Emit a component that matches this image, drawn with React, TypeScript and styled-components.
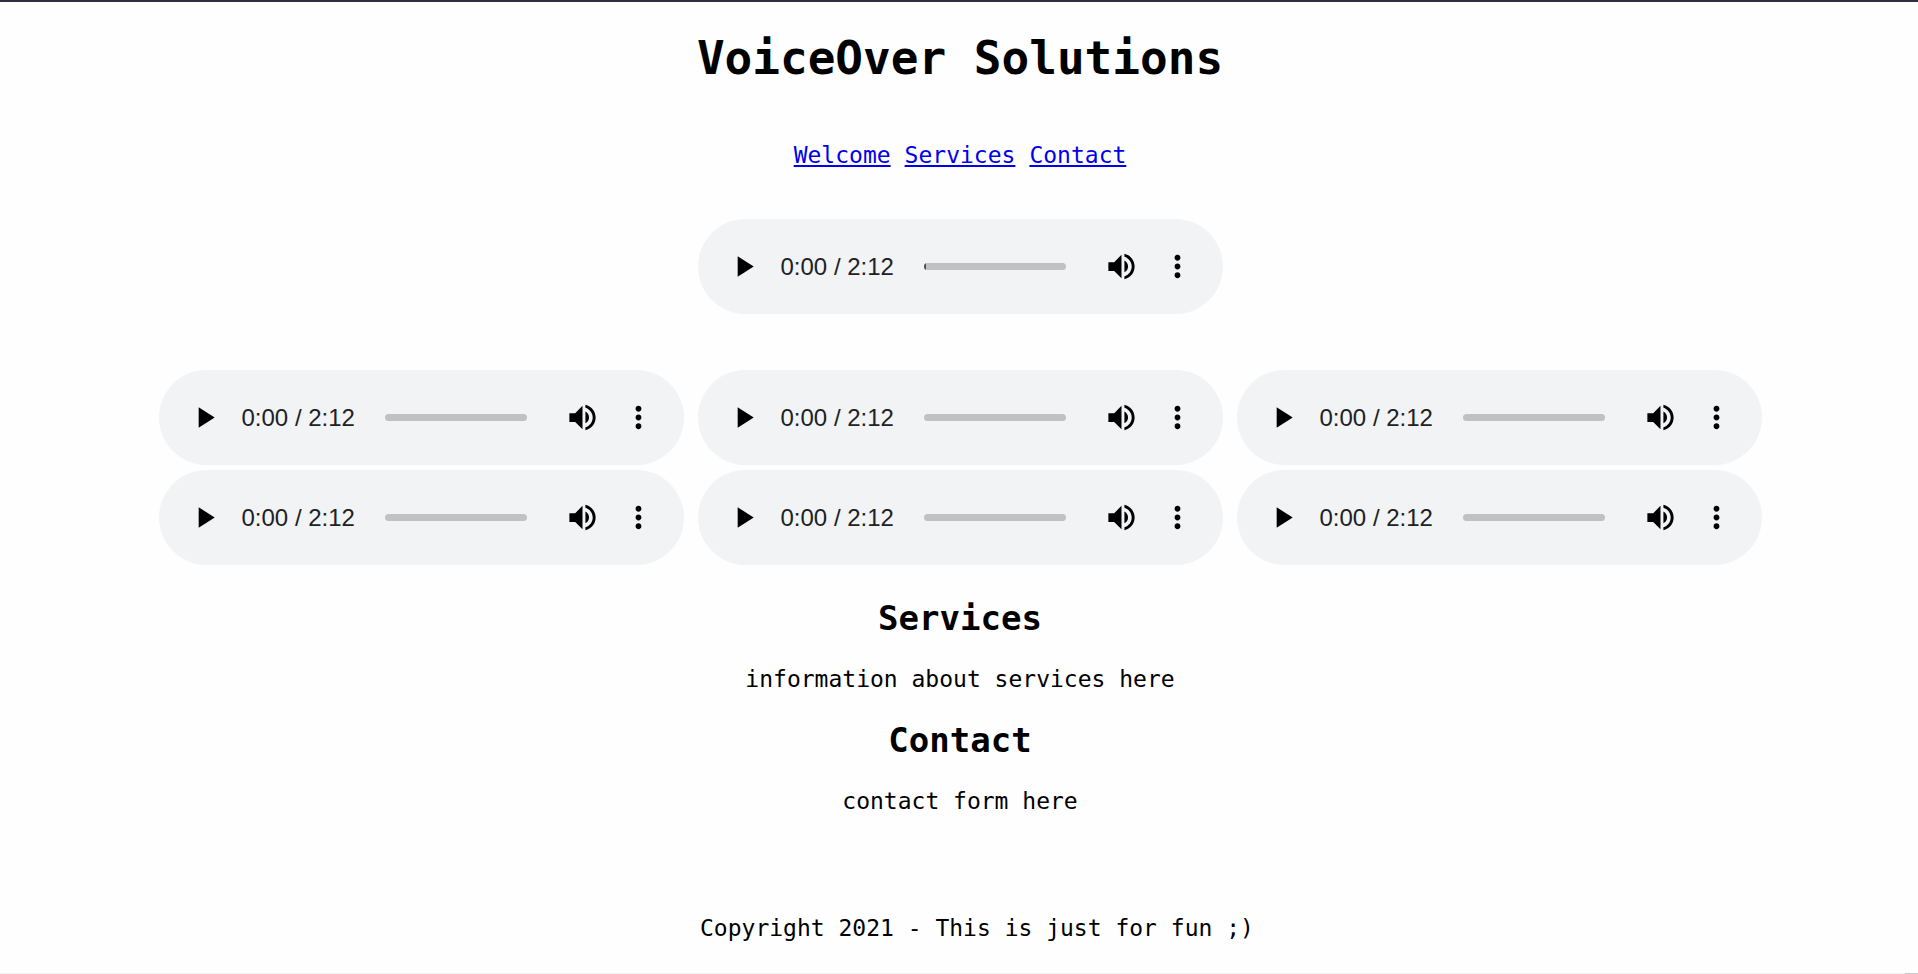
import React from "react";
import styled, { createGlobalStyle } from "styled-components";

const GlobalStyle = createGlobalStyle`
  * {
    box-sizing: border-box;
  }
  body {
    margin: 0;
    background: #fefefe;
    color: #000;
    font-family: "DejaVu Sans Mono", "Liberation Mono", monospace;
    font-size: 23px;
    line-height: 27px;
  }
`;

const Page = styled.div`
  display: flex;
  flex-direction: column;
  min-height: 100vh;
  border-top: 2px solid #2f2f40;
`;

const Content = styled.div`
  display: flex;
  flex-direction: column;
  align-items: center;
  padding-left: 2px;
`;

const Title = styled.h1`
  margin: 29px 0 57px;
  font-size: 46px;
  line-height: 54px;
`;

const Nav = styled.nav`
  display: flex;
  gap: 14px;
  margin-bottom: 50px;
`;

const NavLink = styled.a`
  color: #0000ee;
  text-decoration: underline;
`;

const Welcome = styled.main`
  display: flex;
  flex-direction: column;
  align-items: center;
  gap: 56px;
`;

const PlayerGrid = styled.div`
  display: flex;
  flex-wrap: wrap;
  justify-content: center;
  gap: 5px 14px;
  max-width: 1608px;
`;

const PlayerShell = styled.div`
  display: flex;
  align-items: center;
  width: 525px;
  height: 95px;
  padding: 0 28px;
  border-radius: 48px;
  background: #f1f3f4;
`;

const IconButton = styled.button`
  display: flex;
  flex: none;
  padding: 0;
  border: 0;
  background: none;
  color: #000;
`;

const Icon = styled.svg`
  width: 35px;
  height: 35px;
  fill: currentColor;
`;

const Time = styled.span`
  width: 144px;
  padding-left: 20px;
  color: #202124;
  font-family: "Liberation Sans", Arial, sans-serif;
  font-size: 24px;
  line-height: 28px;
  white-space: nowrap;
`;

const Seek = styled.input<{ $loaded: boolean }>`
  appearance: none;
  flex: none;
  width: 142px;
  height: 7px;
  margin: 0 38px 0 19px;
  border-radius: 4px;
  background: #c0c2c1;
  overflow: hidden;

  &::-webkit-slider-thumb {
    appearance: none;
    width: 2px;
    height: 7px;
    background: ${(p) => (p.$loaded ? "#4d4e50" : "transparent")};
  }
`;

const Controls = styled.div`
  display: flex;
  gap: 21px;
`;

const Heading = styled.h2`
  margin: 0 0 28px;
  font-size: 34px;
  line-height: 40px;
`;

const Section = styled.section`
  margin-top: ${(p: { $gap: number }) => p.$gap}px;
  text-align: center;
`;

const Text = styled.p`
  margin: 0;
`;

const Footer = styled.footer`
  width: 520px;
  margin: 100px 0 30px;
  white-space: nowrap;
`;

const BottomEdge = styled.div`
  display: flex;
  justify-content: flex-end;
  height: 1px;
  margin-top: auto;
  background: #efefef;
`;

const EdgeCorner = styled.div`
  width: 13px;
  background: #c8c8c8;
`;

function Player({ name, loaded = false }: { name: string; loaded?: boolean }) {
  return (
    <PlayerShell role="group" aria-label={name}>
      <IconButton type="button" aria-label="Play">
        <Icon viewBox="0 0 24 24">
          <path d="M8 5v14l11-7z" />
        </Icon>
      </IconButton>
      <Time>0:00 / 2:12</Time>
      <Seek type="range" min={0} max={132} defaultValue={0} aria-label="Seek" $loaded={loaded} />
      <Controls>
        <IconButton type="button" aria-label="Mute">
          <Icon viewBox="0 0 24 24">
            <path d="M3 9v6h4l5 5V4L7 9H3zm13.5 3c0-1.77-1.02-3.29-2.5-4.03v8.05c1.48-.73 2.5-2.25 2.5-4.02zM14 3.23v2.06c2.89.86 5 3.54 5 6.71s-2.11 5.85-5 6.71v2.06c4.01-.91 7-4.49 7-8.77s-2.99-7.86-7-8.77z" />
          </Icon>
        </IconButton>
        <IconButton type="button" aria-label="More options">
          <Icon viewBox="0 0 24 24">
            <path d="M12 8c1.1 0 2-.9 2-2s-.9-2-2-2-2 .9-2 2 .9 2 2 2zm0 2c-1.1 0-2 .9-2 2s.9 2 2 2 2-.9 2-2-.9-2-2-2zm0 6c-1.1 0-2 .9-2 2s.9 2 2 2 2-.9 2-2-.9-2-2-2z" />
          </Icon>
        </IconButton>
      </Controls>
    </PlayerShell>
  );
}

const samples = ["Sample 1", "Sample 2", "Sample 3", "Sample 4", "Sample 5", "Sample 6"];

export default function App() {
  return (
    <>
      <GlobalStyle />
      <Page>
        <Content>
          <Title>VoiceOver Solutions</Title>
          <Nav>
            <NavLink href="#welcome">Welcome</NavLink>
            <NavLink href="#services">Services</NavLink>
            <NavLink href="#contact">Contact</NavLink>
          </Nav>
          <Welcome id="welcome">
            <Player name="Introduction" loaded />
            <PlayerGrid>
              {samples.map((name) => (
                <Player key={name} name={name} />
              ))}
            </PlayerGrid>
          </Welcome>
          <Section id="services" $gap={33}>
            <Heading>Services</Heading>
            <Text>information about services here</Text>
          </Section>
          <Section id="contact" $gap={27}>
            <Heading>Contact</Heading>
            <Text>contact form here</Text>
          </Section>
          <Footer>Copyright 2021 - This is just for fun ;)</Footer>
        </Content>
        <BottomEdge>
          <EdgeCorner />
        </BottomEdge>
      </Page>
    </>
  );
}
